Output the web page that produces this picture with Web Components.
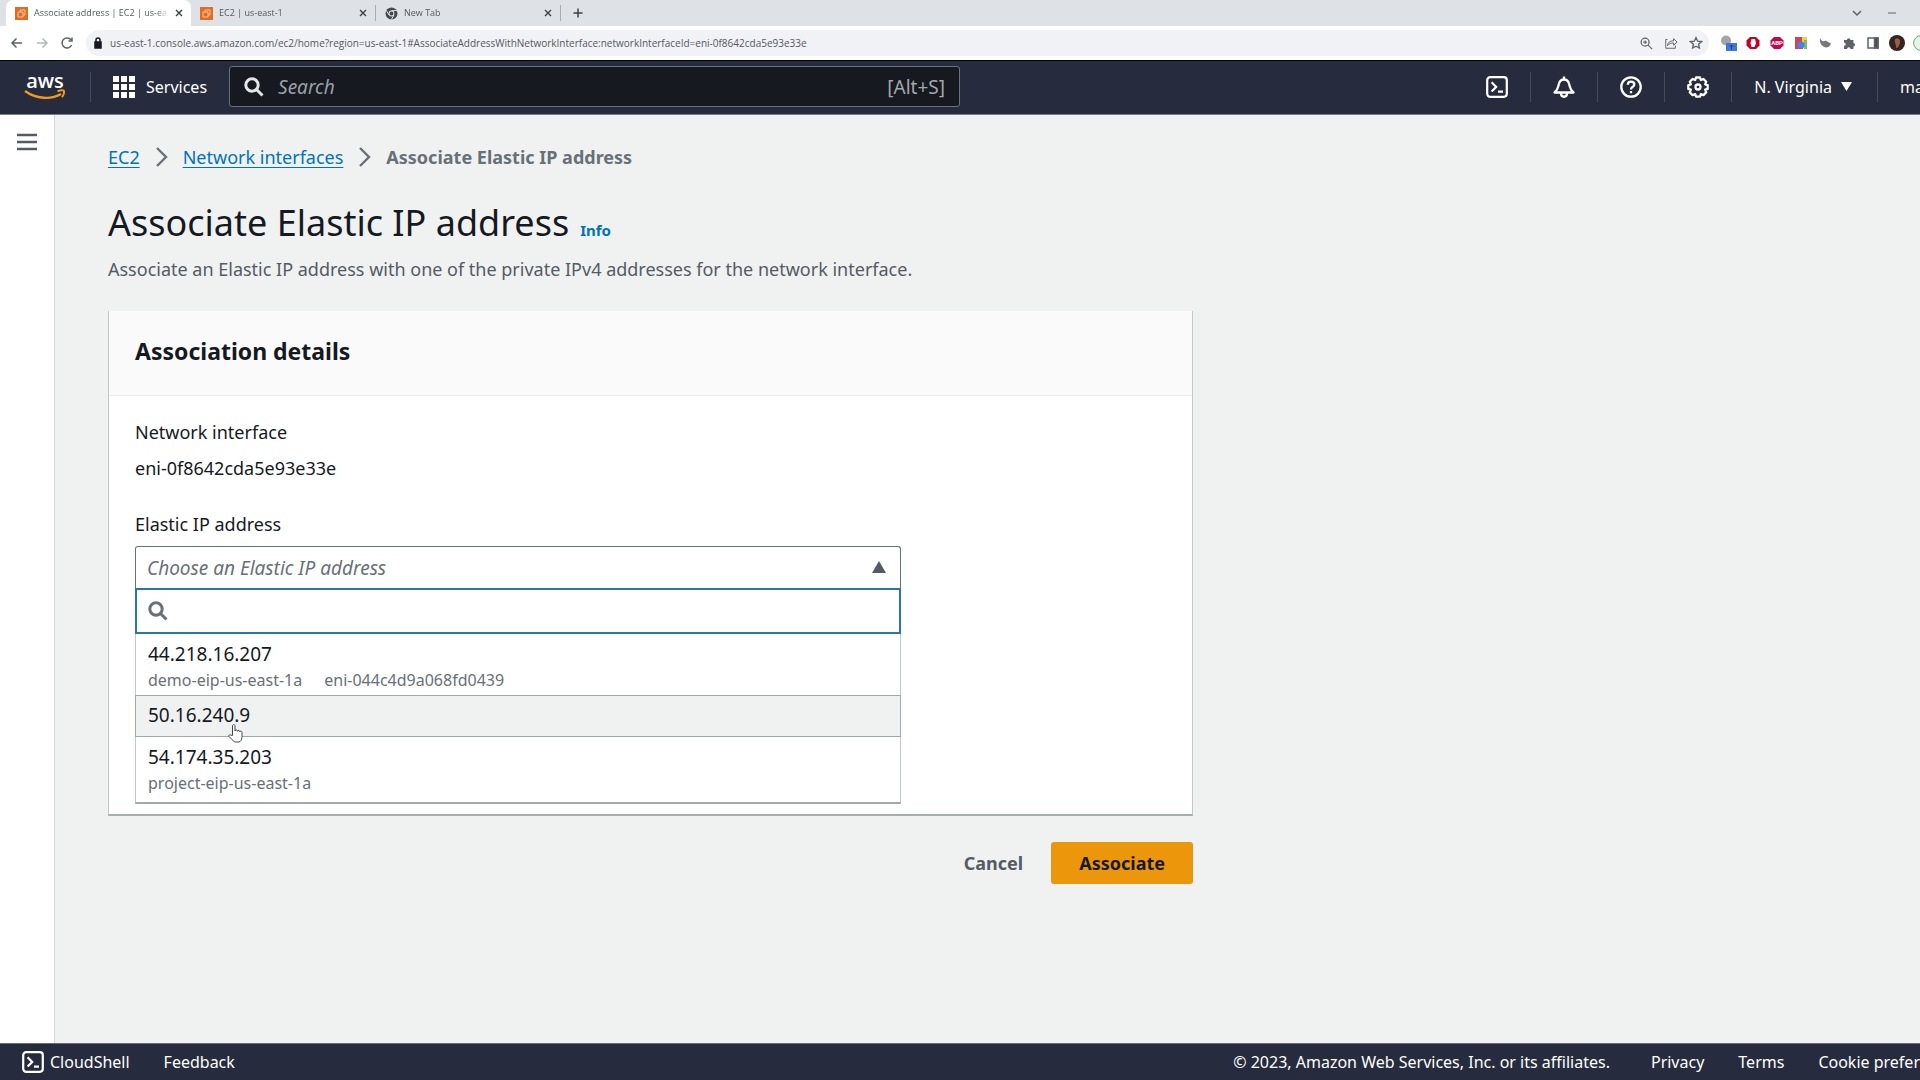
<!DOCTYPE html>
<html lang="en">
<head>
<meta charset="utf-8">
<title>Associate address | EC2 | us-east-1</title>
<style>
  body {
    margin: 0;
    font-family: "Noto Sans", "Open Sans", sans-serif;
    font-size: 18px;
    line-height: 28px;
    color: #16191f;
    background: #f0f2f2;
    overflow-x: hidden;
  }
</style>
</head>
<body>
<console-page>
  <browser-chrome slot="chrome">
    <browser-tab slot="tabs" active icon="ec2">Associate address | EC2 | us-east-1</browser-tab>
    <browser-tab slot="tabs" icon="ec2">EC2 | us-east-1</browser-tab>
    <browser-tab slot="tabs" icon="chrome">New Tab</browser-tab>
  </browser-chrome>
  <aws-nav slot="nav"></aws-nav>
  <side-rail slot="side"></side-rail>
  <crumb-trail>
    <a href="#ec2">EC2</a>
    <a href="#interfaces">Network interfaces</a>
    <b>Associate Elastic IP address</b>
  </crumb-trail>
  <page-heading>
    Associate Elastic IP address
    <a slot="info" href="#info">Info</a>
    <span slot="description">Associate an Elastic IP address with one of the private IPv4 addresses for the network interface.</span>
  </page-heading>
  <form-card>
    <span slot="title">Association details</span>
    <form-field label="Network interface">eni-0f8642cda5e93e33e</form-field>
    <ip-select label="Elastic IP address" placeholder="Choose an Elastic IP address">
      <ip-option>44.218.16.207<span slot="tags">demo-eip-us-east-1a</span><span slot="tags">eni-044c4d9a068fd0439</span></ip-option>
      <ip-option highlighted>50.16.240.9</ip-option>
      <ip-option>54.174.35.203<span slot="tags">project-eip-us-east-1a</span></ip-option>
    </ip-select>
  </form-card>
  <form-actions>
    <action-button>Cancel</action-button>
    <action-button primary>Associate</action-button>
  </form-actions>
  <console-footer slot="footer"></console-footer>
</console-page>

<script>
/**
 * shared base, stamps the html getter into an open shadow root
 */
class ConsoleElement extends HTMLElement {
  constructor() {
    super();
    this.template = document.createElement("template");
    this.attachShadow({ mode: "open" });
  }
  get html() {
    return "";
  }
  render() {
    this.shadowRoot.innerHTML = "";
    this.template.innerHTML = this.html;
    this.shadowRoot.appendChild(this.template.content.cloneNode(true));
  }
  connectedCallback() {
    this.render();
  }
}

// svg bodies used in more than one element
const icons = {
  search: `<svg viewBox="0 0 20 20" fill="none" stroke="currentColor" stroke-width="3"><circle cx="8" cy="8" r="6.2"/><path d="M12.5 12.5l6 6"/></svg>`,
  shell: `<svg viewBox="0 0 22 22" fill="none" stroke="currentColor" stroke-width="2.2"><rect x="1.2" y="1.2" width="19.6" height="19.6" rx="3"/><path d="M5.6 6.2l4.6 4.7-4.6 4.7M12 15.6h5"/></svg>`,
  ec2: `<svg class="solid" viewBox="0 0 13 13"><rect width="13" height="13" fill="#e06c26"/><path d="M3 5h5v5H3zM5 5V3h5v5H8" fill="none" stroke="#f8c49c"/></svg>`,
  chrome: `<svg class="solid" viewBox="0 0 13 13"><circle cx="6.5" cy="6.5" r="6" fill="#45484d"/><circle cx="6.5" cy="6.5" r="2.9" fill="#dee1e6"/><circle cx="6.5" cy="6.5" r="1.9" fill="#45484d"/><path d="M6.5 3.6H12M4 8L1.200 3.300M9 8l-2.700 4.500" stroke="#dee1e6"/></svg>`
};

class ConsolePage extends ConsoleElement {
  static get tag() {
    return "console-page";
  }
  get html() {
    return `
    <style>
      :host { display: flex; flex-direction: column; min-height: 100vh; overflow: hidden; }
      .body { display: flex; flex: 1; }
      main { flex: 1; min-width: 0; padding: 28px 53px; }
    </style>
    <slot name="chrome"></slot>
    <slot name="nav"></slot>
    <div class="body">
      <slot name="side"></slot>
      <main><slot></slot></main>
    </div>
    <slot name="footer"></slot>`;
  }
}

class BrowserTab extends ConsoleElement {
  static get tag() {
    return "browser-tab";
  }
  get html() {
    return `
    <style>
      :host {
        display: flex;
        align-items: center;
        gap: 6px;
        box-sizing: border-box;
        width: 185px;
        height: 26px;
        padding: 0 8px 0 9px;
        border-right: 1px solid #a9adb3;
        border-image: linear-gradient(#dee1e6 20%, #a9adb3 20%, #a9adb3 80%, #dee1e6 80%) 1;
        color: #55585d;
      }
      :host([active]) {
        background: #fff;
        border: 0;
        border-radius: 7px 7px 0 0;
      }
      svg { width: 13px; height: 13px; flex: none; }
      .label {
        flex: 1;
        overflow: hidden;
        white-space: nowrap;
        mask-image: linear-gradient(90deg, #000 90%, transparent);
      }
      button { padding: 0; border: 0; background: none; color: #3c4043; height: 8px; display: flex; }
      button svg { width: 8px; height: 8px; }
    </style>
    ${icons[this.getAttribute("icon")]}
    <span class="label"><slot></slot></span>
    <button aria-label="Close tab"><svg viewBox="0 0 8 8" stroke="currentColor" stroke-width="1.400"><path d="M1 1l6 6M7 1L1 7"/></svg></button>`;
  }
}

class BrowserChrome extends ConsoleElement {
  static get tag() {
    return "browser-chrome";
  }
  get html() {
    return `
    <style>
      :host { display: block; font-family: "Open Sans", sans-serif; font-size: 9px; line-height: 14px; background: #fff; border-bottom: 1px solid #050608; }
      .tabs { display: flex; align-items: center; height: 26px; padding-left: 6px; background: #dee1e6; }
      .bar { display: flex; align-items: center; height: 34px; padding-left: 9px; }
      button { display: flex; padding: 0; border: 0; background: none; color: #5f6368; }
      svg { display: block; width: 16px; height: 16px; fill: none; stroke: currentColor; stroke-width: 1.5; }
      svg.solid { stroke: none; }
      .add { margin-left: 9px; color: #3c4043; }
      .window { display: flex; gap: 19px; margin-left: auto; padding-right: 20px; }
      .history { display: flex; gap: 9px; margin-right: 11px; }
      .faded { color: #b5b8bc; }
      .address { display: flex; flex: 1; align-items: center; gap: 7px; box-sizing: border-box; height: 26px; padding: 0 6px 0 7px; border-radius: 13px; background: #f0f2f5; }
      .address svg { width: 14px; height: 14px; }
      .address .lock { width: 10px; }
      .address input { flex: 1; min-width: 0; padding: 0; border: 0; outline: 0; background: none; font: inherit; font-size: 10px; color: #55585d; }
      .page { display: flex; gap: 11px; }
      .extensions { display: flex; align-items: center; gap: 8px; margin: 0 -9px 0 12px; }
    </style>
    <div class="tabs">
      <slot name="tabs"></slot>
      <button class="add" aria-label="New tab"><svg viewBox="0 0 16 16"><path d="M8 3.500v9M3.500 8h9"/></svg></button>
      <div class="window">
        <button aria-label="Search tabs"><svg viewBox="0 0 16 16"><path d="M4 6l4 4 4-4"/></svg></button>
        <button aria-label="Minimize"><svg viewBox="0 0 16 16"><path d="M4 8h8" stroke-width="1"/></svg></button>
      </div>
    </div>
    <div class="bar">
      <div class="history">
        <button aria-label="Back"><svg viewBox="0 0 16 16"><path d="M13 8H3M7.500 3.500L3 8l4.500 4.500"/></svg></button>
        <button class="faded" aria-label="Forward"><svg viewBox="0 0 16 16"><path d="M3 8h10M8.500 3.500L13 8l-4.500 4.500"/></svg></button>
        <button aria-label="Reload"><svg viewBox="0 0 16 16"><path d="M12.600 10A5 5 0 1 1 12 4.800M13 2.500V6H9.500"/></svg></button>
      </div>
      <div class="address">
        <svg class="lock" viewBox="0 0 10 14"><rect x="2" y="6" width="6" height="6" fill="currentColor"/><path d="M3 6V4a2 2 0 0 1 4 0v2"/></svg>
        <input aria-label="Address" value="us-east-1.console.aws.amazon.com/ec2/home?region=us-east-1#AssociateAddressWithNetworkInterface:networkInterfaceId=eni-0f8642cda5e93e33e">
        <div class="page">
          <button aria-label="Zoom"><svg viewBox="0 0 16 16"><circle cx="7" cy="7" r="4.500"/><path d="M10.500 10.500L15 15M5 7h4M7 5v4" stroke-width="1.300"/></svg></button>
          <button aria-label="Share"><svg viewBox="0 0 16 16"><g stroke-width="1.100"><path d="M4 4H2v10h11v-3M4 11c.5-4 3-5.500 7-5.500V3l4 4-4 3.500V8C8 8 6 8.500 4 11z"/></g></svg></button>
          <button aria-label="Bookmark"><svg viewBox="0 0 16 16"><path d="M8 1.800l1.900 4.100 4.400.5-3.300 3 .9 4.400L8 11.600l-3.900 2.200.9-4.400-3.300-3 4.400-.5z"/></svg></button>
        </div>
      </div>
      <div class="extensions">
        <button aria-label="Translate"><svg class="solid" viewBox="0 0 16 16"><circle cx="5" cy="5.500" r="5" fill="#a3a6a8"/><rect x="5" y="8" width="11" height="8" fill="#3e78dc"/><path d="M10.500 14.500V10M9 11.500l1.500-1.500 1.500 1.500" stroke="#143a86" stroke-width="1"/></svg></button>
        <button aria-label="Ad blocker"><svg class="solid" viewBox="0 0 16 16"><path d="M5 2h6l3.500 3.500v5L11 14H5l-3.500-3.500v-5z" fill="#c70024"/><path d="M5.500 8l1-4h3.500l1 4-1.500 4h-3z" fill="#fff"/></svg></button>
        <button aria-label="ABP"><svg class="solid" viewBox="0 0 16 16"><path d="M5 2h6l3.500 3.500v5L11 14H5l-3.500-3.500v-5z" fill="#c5064b"/><text x="8" y="10" font-family="Roboto, sans-serif" font-size="6" font-weight="700" text-anchor="middle" fill="#fff">ABP</text></svg></button>
        <button aria-label="Color picker"><svg class="solid" viewBox="0 0 16 16"><path d="M2 2h8v12H2z" fill="#d94150"/><path d="M9 2h5v6H9z" fill="#f2cb48"/><path d="M11 5h3v9h-3z" fill="#78bd68"/><circle cx="8" cy="10" r="3.500" fill="#3f83ed"/></svg></button>
        <button aria-label="Night mode"><svg class="solid" viewBox="0 0 16 16"><path d="M3 3c1 3 3 4 5.500 2.500L14 8.500c-1 2.500-2.500 4-5 4S2 9 3 3z" fill="#767a7f"/></svg></button>
        <button aria-label="Extensions"><svg class="solid" viewBox="0 0 16 16"><path d="M3 5h3a1.700 1.700 0 0 1 3.400 0h3v3a1.700 1.700 0 0 1 0 3.400V14H9.500a1.700 1.700 0 0 0-3.400 0H3v-3a1.700 1.700 0 0 0 0-3.400z" fill="#5f6368"/></svg></button>
        <button aria-label="Side panel"><svg viewBox="0 0 16 16"><path d="M3 3h10v10H3z"/><path d="M9.500 3H13v10H9.500z" fill="#4b4e52"/></svg></button>
        <button aria-label="Profile"><svg class="solid" viewBox="0 0 16 16"><circle cx="8" cy="8" r="8" fill="#35251e"/><path d="M6 4c3-2 6 1 5 4s-2 5-4 5c1-2-2-5-1-9z" fill="#9a5f42"/></svg></button>
        <button aria-label="Update"><svg class="solid" viewBox="0 0 16 16"><circle cx="8" cy="8" r="7.400" fill="#e4f4e6" stroke="#68a96f" stroke-width="1"/></svg></button>
      </div>
    </div>`;
  }
}

class AwsNav extends ConsoleElement {
  static get tag() {
    return "aws-nav";
  }
  get html() {
    return `
    <style>
      :host { display: flex; align-items: center; box-sizing: border-box; height: 54px; padding-bottom: 2px; background: #262c3e; border-bottom: 1px solid #777e8b; color: #fff; font-size: 16px; }
      .logo { padding: 0 24px; display: flex; flex-direction: column; align-items: center; color: #fff; text-decoration: none; font: 600 20px/16px "Open Sans", sans-serif; }
      .logo svg { width: 42px; height: 11px; }
      .line { width: 1px; height: 30px; background: #454d5c; flex: none; }
      button { display: flex; align-items: center; gap: 11px; padding: 0 22px; border: 0; background: none; color: inherit; font: inherit; white-space: nowrap; }
      button svg { display: block; width: 22px; height: 22px; }
      .search { display: flex; align-items: center; gap: 14px; flex: 0 1 701px; height: 39px; padding: 0 14px; border: 1px solid #6b717b; border-radius: 3px; background: #16191f; color: #a3a8ad; font-size: 19px; }
      .search svg { width: 20px; height: 20px; color: #e3e5e6; flex: none; }
      input { flex: 1; min-width: 0; padding: 0; border: 0; outline: 0; background: none; color: inherit; font: inherit; }
      input::placeholder { color: #9ba0a7; font-style: italic; opacity: 1; }
      .tools { display: flex; align-items: center; margin-left: auto; }
      .tools button svg.caret { width: 11px; height: 9px; }
      .region { gap: 9px; padding-right: 25px; }
      .account { padding-right: 0; width: 42px; }
    </style>
    <a class="logo" href="#home" aria-label="AWS home">aws
      <svg viewBox="0 0 42 11" fill="none" stroke="#f09a1c" stroke-width="2.400"><path d="M1 2c11 8 26 9 36 3"/><path d="M33.500 2.300c4-1.500 6.500-1 6.600 0 .2 1.500-.6 4-2 6" stroke-width="2"/></svg>
    </a>
    <span class="line"></span>
    <button><svg viewBox="0 0 22 22" fill="#fff"><path d="M0 0h6v6H0zM8 0h6v6H8zM16 0h6v6h-6zM0 8h6v6H0zM8 8h6v6H8zM16 8h6v6h-6zM0 16h6v6H0zM8 16h6v6H8zM16 16h6v6h-6z"/></svg>Services</button>
    <label class="search">${icons.search}<input type="text" placeholder="Search" aria-label="Search"><span>[Alt+S]</span></label>
    <div class="tools">
      <button aria-label="CloudShell">${icons.shell}</button>
      <span class="line"></span>
      <button aria-label="Notifications"><svg viewBox="0 0 22 22" fill="none" stroke="#fff" stroke-width="2.300" stroke-linejoin="round"><path d="M1.500 16.500c4-3 3.500-6 4.500-9 .7-2.300 2.500-4 5-4s4.300 1.700 5 4c1 3 .5 6 4.500 9zM11 3.500V.5M8 17.500c0 4.300 6 4.300 6 0"/></svg></button>
      <span class="line"></span>
      <button aria-label="Help"><svg viewBox="0 0 22 22" fill="none" stroke="#fff" stroke-width="2.300"><circle cx="11" cy="11" r="9.700"/><path d="M7.800 8.700c0-4.300 6.500-4 6.500-.3 0 2.500-3.300 2.200-3.300 5M11 15v2.200"/></svg></button>
      <span class="line"></span>
      <button aria-label="Settings"><svg viewBox="0 0 22 22" fill="none" stroke="#fff" stroke-width="2.300" stroke-linejoin="round"><path d="M9 1.500h4l.8 2.500 2.700-1 2.700 2.700-1 2.600 2.500.8v3.800l-2.500.8 1 2.700-2.700 2.700-2.700-1-.8 2.500H9l-.8-2.500-2.700 1-2.700-2.700 1-2.700-2.500-.8V9.100l2.500-.8-1-2.600L5.500 3l2.700 1z"/><circle cx="11" cy="11" r="2.500"/></svg></button>
      <span class="line"></span>
      <button class="region">N. Virginia<svg class="caret" viewBox="0 0 11 9"><path d="M0 0h11L5.500 9z" fill="#fff"/></svg></button>
      <span class="line"></span>
      <button class="account">ma</button>
    </div>`;
  }
}

class SideRail extends ConsoleElement {
  static get tag() {
    return "side-rail";
  }
  get html() {
    return `
    <style>
      :host { display: block; width: 54px; background: #fff; border-right: 1px solid #d3d6d8; }
      button { display: block; margin: 18px auto 0; padding: 0; border: 0; background: none; }
      svg { display: block; width: 20px; height: 18px; }
    </style>
    <button aria-label="Open navigation"><svg viewBox="0 0 20 18" stroke="#545b64" stroke-width="2.400"><path d="M0 2h20M0 9h20M0 16h20"/></svg></button>`;
  }
}

class CrumbTrail extends ConsoleElement {
  static get tag() {
    return "crumb-trail";
  }
  get html() {
    return `
    <style>
      :host { display: block; margin-bottom: 28px; }
      nav { display: flex; align-items: center; gap: 15px; height: 28px; color: #687078; }
      nav svg { width: 13px; height: 20px; }
      a { color: #0073bb; text-underline-offset: 3px; }
    </style>
    <nav aria-label="Breadcrumbs"></nav>`;
  }
  // chevron between every pair of items
  connectedCallback() {
    super.connectedCallback();
    const nav = this.shadowRoot.querySelector("nav");
    [...this.children].forEach((item, i) => {
      if (i > 0) {
        nav.insertAdjacentHTML(
          "beforeend",
          `<svg viewBox="0 0 13 20" fill="none" stroke="#687078" stroke-width="2.400"><path d="M2 1l9 9-9 9"/></svg>`
        );
      }
      nav.appendChild(item.cloneNode(true));
    });
  }
}

class PageHeading extends ConsoleElement {
  static get tag() {
    return "page-heading";
  }
  get html() {
    return `
    <style>
      :host { display: block; margin-bottom: 28px; }
      .row { display: flex; align-items: baseline; gap: 11px; }
      h1 { margin: 0; font-weight: 400; font-size: 36px; line-height: 48px; }
      p { margin: 8px 0 0; color: #545b64; }
      ::slotted(a) { color: #0073bb; font-weight: 700; font-size: 15px; text-decoration: none; }
    </style>
    <div class="row"><h1><slot></slot></h1><slot name="info"></slot></div>
    <p><slot name="description"></slot></p>`;
  }
}

class FormCard extends ConsoleElement {
  static get tag() {
    return "form-card";
  }
  get html() {
    return `
    <style>
      :host { display: block; box-sizing: border-box; max-width: 1085px; background: #fff; border: 1px solid #c3c8ca; border-top: 0; border-bottom: 2px solid #a9aeb1; }
      header { padding: 24px 26px 28px; background: #fafafa; border-bottom: 1px solid #eaeded; }
      h2 { margin: 0; font-size: 23px; line-height: 32px; }
      .content { padding: 22px 26px 10px; display: grid; gap: 28px; }
    </style>
    <header><h2><slot name="title"></slot></h2></header>
    <div class="content"><slot></slot></div>`;
  }
}

class FormField extends ConsoleElement {
  static get tag() {
    return "form-field";
  }
  get html() {
    return `
    <style>
      :host { display: grid; gap: 8px; }
    </style>
    <span>${this.getAttribute("label")}</span>
    <span><slot></slot></span>`;
  }
}

class IpOption extends ConsoleElement {
  static get tag() {
    return "ip-option";
  }
  get html() {
    return `
    <style>
      :host { display: block; position: relative; padding: 6px 12px 1px; border: 1px solid transparent; font-size: 19px; line-height: 26px; }
      :host([highlighted]) { background: #f0f2f2; border-color: #a2a8ad; padding: 6px 12px 8px; }
      .tags { display: flex; gap: 22px; color: #687078; font-size: 16px; }
      .pointer { position: absolute; left: 92px; top: 28px; width: 15px; height: 19px; }
    </style>
    <div><slot></slot></div>
    <div class="tags"><slot name="tags"></slot></div>
    ${this.hasAttribute("highlighted") ? `<svg class="pointer" viewBox="0 0 15 19" fill="#fff" stroke="#44484d" stroke-linejoin="round"><path d="M4.500 11.500V2c0-2 2.500-2 2.500 0v5c0-1.500 2.500-1.500 2.500.3 0-1.300 2.300-1.200 2.300.5 0-1 2.200-1 2.200.5v4.200c0 3-1.500 5.500-3 5.500H6.500L1 12.500c-.8-1.500 1-2.300 2-1.300z"/></svg>` : ""}`;
  }
  connectedCallback() {
    super.connectedCallback();
    this.setAttribute("role", "option");
  }
}

class IpSelect extends ConsoleElement {
  static get tag() {
    return "ip-select";
  }
  get html() {
    return `
    <style>
      :host { display: block; max-width: 766px; }
      label { display: block; margin-bottom: 8px; }
      .trigger { display: grid; align-items: center; }
      .trigger > * { grid-area: 1 / 1; }
      select { appearance: none; width: 100%; height: 42px; padding: 0 11px; border: 1px solid #687078; border-bottom: 0; border-radius: 3px 3px 0 0; background: #fff; color: #687078; font: italic 19px "Noto Sans", sans-serif; }
      .caret { justify-self: end; width: 14px; height: 12px; margin-right: 15px; pointer-events: none; }
      .filter { display: flex; align-items: center; gap: 10px; height: 42px; padding: 0 11px; border: 2px solid #2b76a8; }
      .filter svg { width: 20px; height: 20px; color: #687078; }
      input { flex: 1; min-width: 0; border: 0; outline: 0; background: none; font: inherit; }
      .list { border: 1px solid #c3c8ca; border-top: 0; border-bottom: 2px solid #a2a8ad; padding-bottom: 4px; }
      .list ::slotted(ip-option) { margin: 0 -1px; }
    </style>
    <label for="choice">${this.getAttribute("label")}</label>
    <div class="trigger">
      <select id="choice"><option>${this.getAttribute("placeholder")}</option></select>
      <svg class="caret" viewBox="0 0 14 12"><path d="M7 0l7 12H0z" fill="#545b64"/></svg>
    </div>
    <div class="filter">${icons.search}<input type="text" aria-label="Filter addresses"></div>
    <div class="list" role="listbox"><slot></slot></div>`;
  }
}

class FormActions extends ConsoleElement {
  static get tag() {
    return "form-actions";
  }
  get html() {
    return `
    <style>
      :host { display: flex; justify-content: flex-end; max-width: 1085px; margin-top: 26px; }
    </style>
    <slot></slot>`;
  }
}

class ActionButton extends ConsoleElement {
  static get tag() {
    return "action-button";
  }
  get html() {
    return `
    <style>
      :host { display: block; }
      button { height: 42px; padding: 0 28px; border: 0; border-radius: 3px; background: none; color: #545b64; font: 700 18px "Noto Sans", sans-serif; }
      :host([primary]) button { background: #ec960c; color: #16191f; }
    </style>
    <button><slot></slot></button>`;
  }
}

class ConsoleFooter extends ConsoleElement {
  static get tag() {
    return "console-footer";
  }
  get html() {
    return `
    <style>
      :host { display: flex; align-items: center; height: 36px; padding-left: 22px; background: #262c3e; border-top: 1px solid #656b77; color: #fff; font-size: 16px; white-space: nowrap; }
      button { display: flex; align-items: center; gap: 6px; padding: 0; border: 0; background: none; color: inherit; font: inherit; }
      button svg { width: 22px; height: 22px; }
      a { color: inherit; text-decoration: none; }
      nav { display: flex; gap: 34px; margin-left: auto; }
      .feedback { margin-left: 34px; }
      .copy { margin-right: 7px; }
    </style>
    <button>${icons.shell}CloudShell</button>
    <a class="feedback" href="#feedback">Feedback</a>
    <nav>
      <span class="copy">© 2023, Amazon Web Services, Inc. or its affiliates.</span>
      <a href="#privacy">Privacy</a>
      <a href="#terms">Terms</a>
      <a href="#cookies">Cookie prefer</a>
    </nav>`;
  }
}

[
  ConsolePage,
  BrowserTab,
  BrowserChrome,
  AwsNav,
  SideRail,
  CrumbTrail,
  PageHeading,
  FormCard,
  FormField,
  IpOption,
  IpSelect,
  FormActions,
  ActionButton,
  ConsoleFooter
].forEach(element => {
  window.customElements.define(element.tag, element);
});
</script>
</body>
</html>
